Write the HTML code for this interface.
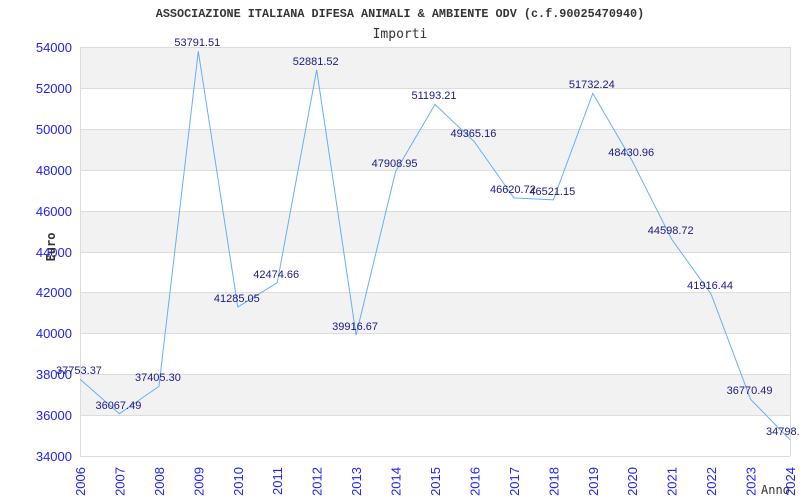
<!DOCTYPE html>
<html><head><meta charset="utf-8"><style>
html,body{margin:0;padding:0;background:#fff;}
svg{display:block;}
</style></head><body>
<svg width="800" height="500" viewBox="0 0 800 500" xmlns="http://www.w3.org/2000/svg">
<rect width="800" height="500" fill="#fff"/>
<text x="400" y="17" text-anchor="middle" font-family="Liberation Mono, monospace" font-size="11.8" font-weight="bold" fill="#333">ASSOCIAZIONE ITALIANA DIFESA ANIMALI &amp; AMBIENTE ODV (c.f.90025470940)</text>
<text x="400" y="38" text-anchor="middle" font-family="DejaVu Sans Mono, monospace" font-size="13" fill="#333">Importi</text>
<g fill="#f2f2f2">
<rect x="80" y="47" width="710" height="41"/>
<rect x="80" y="129" width="710" height="41"/>
<rect x="80" y="211" width="710" height="41"/>
<rect x="80" y="292" width="710" height="41"/>
<rect x="80" y="374" width="710" height="41"/>
</g>
<g stroke="#dcdcdc" stroke-width="1">
<line x1="80" y1="47.5" x2="790" y2="47.5"/>
<line x1="80" y1="88.5" x2="790" y2="88.5"/>
<line x1="80" y1="129.5" x2="790" y2="129.5"/>
<line x1="80" y1="170.5" x2="790" y2="170.5"/>
<line x1="80" y1="211.5" x2="790" y2="211.5"/>
<line x1="80" y1="252.5" x2="790" y2="252.5"/>
<line x1="80" y1="292.5" x2="790" y2="292.5"/>
<line x1="80" y1="333.5" x2="790" y2="333.5"/>
<line x1="80" y1="374.5" x2="790" y2="374.5"/>
<line x1="80" y1="415.5" x2="790" y2="415.5"/>
<line x1="80" y1="456.5" x2="790" y2="456.5"/>
<line x1="80.5" y1="47" x2="80.5" y2="456"/>
<line x1="790.5" y1="47" x2="790.5" y2="456"/>
</g>
<g font-family="Liberation Sans, sans-serif" font-size="13" fill="#2222f0" text-anchor="end">
<text x="72" y="52">54000</text>
<text x="72" y="93">52000</text>
<text x="72" y="134">50000</text>
<text x="72" y="175">48000</text>
<text x="72" y="216">46000</text>
<text x="72" y="257">44000</text>
<text x="72" y="297">42000</text>
<text x="72" y="338">40000</text>
<text x="72" y="379">38000</text>
<text x="72" y="420">36000</text>
<text x="72" y="461">34000</text>
</g>
<text transform="translate(55,247) rotate(-90)" text-anchor="middle" font-family="DejaVu Sans Mono, monospace" font-size="12" font-weight="bold" fill="#333">Euro</text>
<text x="761" y="494" font-family="DejaVu Sans Mono, monospace" font-size="12" fill="#333">Anno</text>
<g font-family="Liberation Sans, sans-serif" font-size="13" fill="#2222f0" text-anchor="end">
<text transform="translate(85,467) rotate(-90)">2006</text>
<text transform="translate(124.4,467) rotate(-90)">2007</text>
<text transform="translate(163.9,467) rotate(-90)">2008</text>
<text transform="translate(203.3,467) rotate(-90)">2009</text>
<text transform="translate(242.8,467) rotate(-90)">2010</text>
<text transform="translate(282.2,467) rotate(-90)">2011</text>
<text transform="translate(321.7,467) rotate(-90)">2012</text>
<text transform="translate(361.1,467) rotate(-90)">2013</text>
<text transform="translate(400.6,467) rotate(-90)">2014</text>
<text transform="translate(440,467) rotate(-90)">2015</text>
<text transform="translate(479.4,467) rotate(-90)">2016</text>
<text transform="translate(518.9,467) rotate(-90)">2017</text>
<text transform="translate(558.3,467) rotate(-90)">2018</text>
<text transform="translate(597.8,467) rotate(-90)">2019</text>
<text transform="translate(637.2,467) rotate(-90)">2020</text>
<text transform="translate(676.7,467) rotate(-90)">2021</text>
<text transform="translate(716.1,467) rotate(-90)">2022</text>
<text transform="translate(755.6,467) rotate(-90)">2023</text>
<text transform="translate(795,467) rotate(-90)">2024</text>
</g>
<polyline fill="none" stroke="#6aaef5" stroke-width="1" points="80,379.2 119.4,413.7 158.9,386.4 198.3,51.3 237.8,307 277.2,282.7 316.7,69.9 356.1,335 395.6,171.6 435,104.4 474.4,141.8 513.9,197.9 553.3,199.9 592.8,93.4 632.2,160.9 671.7,239.3 711.1,294.1 750.6,399.3 790,439.7"/>
<g font-family="Liberation Sans, sans-serif" font-size="11" fill="#1a1a80" text-anchor="middle">
<text x="79" y="374">37753.37</text>
<text x="118.4" y="409">36067.49</text>
<text x="157.9" y="381">37405.30</text>
<text x="197.3" y="46">53791.51</text>
<text x="236.8" y="302">41285.05</text>
<text x="276.2" y="278">42474.66</text>
<text x="315.7" y="65">52881.52</text>
<text x="355.1" y="330">39916.67</text>
<text x="394.6" y="167">47908.95</text>
<text x="434" y="99">51193.21</text>
<text x="473.4" y="137">49365.16</text>
<text x="512.9" y="193">46620.72</text>
<text x="552.3" y="195">46521.15</text>
<text x="591.8" y="88">51732.24</text>
<text x="631.2" y="156">48430.96</text>
<text x="670.7" y="234">44598.72</text>
<text x="710.1" y="289">41916.44</text>
<text x="749.6" y="394">36770.49</text>
<text x="789" y="435">34798.55</text>
</g>
</svg>
</body></html>
